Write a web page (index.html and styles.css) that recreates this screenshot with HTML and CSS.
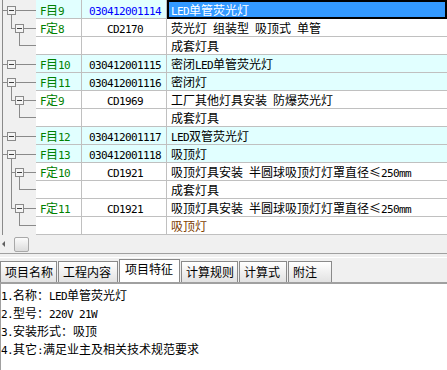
FILE: index.html
```html
<!DOCTYPE html>
<html>
<head>
<meta charset="utf-8">
<link rel="stylesheet" href="styles.css">
</head>
<body>
<div class="win">
  <div class="grid">
    <svg class="tree" width="36" height="235" viewBox="0 0 36 235">
      <g stroke="#8a8a8a" stroke-width="1" fill="none" shape-rendering="crispEdges">
        <line x1="2.5" y1="0" x2="2.5" y2="235"/>
        <line x1="2" y1="10.5" x2="7" y2="10.5"/>
        <line x1="16" y1="10.5" x2="36" y2="10.5"/>
        <line x1="11.5" y1="15" x2="11.5" y2="28"/>
        <line x1="11" y1="28.5" x2="15" y2="28.5"/>
        <line x1="24" y1="28.5" x2="36" y2="28.5"/>
        <line x1="19.5" y1="33" x2="19.5" y2="45"/>
        <line x1="19" y1="45.5" x2="36" y2="45.5"/>
        <line x1="2" y1="64.5" x2="7" y2="64.5"/>
        <line x1="16" y1="64.5" x2="36" y2="64.5"/>
        <line x1="2" y1="82.5" x2="7" y2="82.5"/>
        <line x1="16" y1="82.5" x2="36" y2="82.5"/>
        <line x1="11.5" y1="87" x2="11.5" y2="100"/>
        <line x1="11" y1="100.5" x2="15" y2="100.5"/>
        <line x1="24" y1="100.5" x2="36" y2="100.5"/>
        <line x1="19.5" y1="105" x2="19.5" y2="117"/>
        <line x1="19" y1="117.5" x2="36" y2="117.5"/>
        <line x1="2" y1="136.5" x2="7" y2="136.5"/>
        <line x1="16" y1="136.5" x2="36" y2="136.5"/>
        <line x1="2" y1="154.5" x2="7" y2="154.5"/>
        <line x1="16" y1="154.5" x2="36" y2="154.5"/>
        <line x1="11.5" y1="159" x2="11.5" y2="208"/>
        <line x1="11" y1="172.5" x2="15" y2="172.5"/>
        <line x1="24" y1="172.5" x2="36" y2="172.5"/>
        <line x1="19.5" y1="177" x2="19.5" y2="189"/>
        <line x1="19" y1="189.5" x2="36" y2="189.5"/>
        <line x1="11" y1="208.5" x2="15" y2="208.5"/>
        <line x1="24" y1="208.5" x2="36" y2="208.5"/>
        <line x1="19.5" y1="213" x2="19.5" y2="225"/>
        <line x1="19" y1="225.5" x2="36" y2="225.5"/>
      </g>
      <g stroke="#8a8a8a" fill="#f4f4f4" shape-rendering="crispEdges">
        <rect x="7.5" y="6.5" width="8" height="8"/>
        <rect x="15.5" y="24.5" width="8" height="8"/>
        <rect x="7.5" y="60.5" width="8" height="8"/>
        <rect x="7.5" y="78.5" width="8" height="8"/>
        <rect x="15.5" y="96.5" width="8" height="8"/>
        <rect x="7.5" y="132.5" width="8" height="8"/>
        <rect x="7.5" y="150.5" width="8" height="8"/>
        <rect x="15.5" y="168.5" width="8" height="8"/>
        <rect x="15.5" y="204.5" width="8" height="8"/>
      </g>
      <g stroke="#404040" shape-rendering="crispEdges">
        <line x1="9" y1="10.5" x2="14" y2="10.5"/>
        <line x1="17" y1="28.5" x2="22" y2="28.5"/>
        <line x1="9" y1="64.5" x2="14" y2="64.5"/>
        <line x1="9" y1="82.5" x2="14" y2="82.5"/>
        <line x1="17" y1="100.5" x2="22" y2="100.5"/>
        <line x1="9" y1="136.5" x2="14" y2="136.5"/>
        <line x1="9" y1="154.5" x2="14" y2="154.5"/>
        <line x1="17" y1="172.5" x2="22" y2="172.5"/>
        <line x1="17" y1="208.5" x2="22" y2="208.5"/>
      </g>
    </svg>
    <div class="rows">
      <div class="row first cyan">
        <div class="c1 g"><span class="a">F</span>目<span class="a">9</span></div>
        <div class="c2 blue"><span class="a">030412001114</span></div>
        <div class="c3 sel"><span class="a">LED</span>单管荧光灯</div>
      </div>
      <div class="row">
        <div class="c1 g"><span class="a">F</span>定<span class="a">8</span></div>
        <div class="c2"><span class="a">CD2170</span></div>
        <div class="c3">荧光灯 组装型 吸顶式 单管</div>
      </div>
      <div class="row">
        <div class="c1"></div>
        <div class="c2"></div>
        <div class="c3">成套灯具</div>
      </div>
      <div class="row cyan">
        <div class="c1 g"><span class="a">F</span>目<span class="a">10</span></div>
        <div class="c2"><span class="a">030412001115</span></div>
        <div class="c3">密闭<span class="a">LED</span>单管荧光灯</div>
      </div>
      <div class="row cyan">
        <div class="c1 g"><span class="a">F</span>目<span class="a">11</span></div>
        <div class="c2"><span class="a">030412001116</span></div>
        <div class="c3">密闭灯</div>
      </div>
      <div class="row">
        <div class="c1 g"><span class="a">F</span>定<span class="a">9</span></div>
        <div class="c2"><span class="a">CD1969</span></div>
        <div class="c3">工厂其他灯具安装 防爆荧光灯</div>
      </div>
      <div class="row">
        <div class="c1"></div>
        <div class="c2"></div>
        <div class="c3">成套灯具</div>
      </div>
      <div class="row cyan">
        <div class="c1 g"><span class="a">F</span>目<span class="a">12</span></div>
        <div class="c2"><span class="a">030412001117</span></div>
        <div class="c3"><span class="a">LED</span>双管荧光灯</div>
      </div>
      <div class="row cyan">
        <div class="c1 g"><span class="a">F</span>目<span class="a">13</span></div>
        <div class="c2"><span class="a">030412001118</span></div>
        <div class="c3">吸顶灯</div>
      </div>
      <div class="row">
        <div class="c1 g"><span class="a">F</span>定<span class="a">10</span></div>
        <div class="c2"><span class="a">CD1921</span></div>
        <div class="c3">吸顶灯具安装 半圆球吸顶灯灯罩直径≤<span class="a">250mm</span></div>
      </div>
      <div class="row">
        <div class="c1"></div>
        <div class="c2"></div>
        <div class="c3">成套灯具</div>
      </div>
      <div class="row">
        <div class="c1 g"><span class="a">F</span>定<span class="a">11</span></div>
        <div class="c2"><span class="a">CD1921</span></div>
        <div class="c3">吸顶灯具安装 半圆球吸顶灯灯罩直径≤<span class="a">250mm</span></div>
      </div>
      <div class="row">
        <div class="c1"></div>
        <div class="c2"></div>
        <div class="c3 brown">吸顶灯</div>
      </div>
    </div>
  </div>
  <div class="hscroll">
    <span class="arrow"></span>
    <span class="thumb"></span>
  </div>
  <div class="splitter"></div>
  <div class="tabs">
    <div class="tab w1">项目名称</div>
    <div class="tab w2">工程内容</div>
    <div class="tab w3 active">项目特征</div>
    <div class="tab w4">计算规则</div>
    <div class="tab w5">计算式</div>
    <div class="tab w6">附注</div>
  </div>
  <div class="content">
    <div class="line"><span class="a">1.</span>名称：<span class="a">LED</span>单管荧光灯</div>
    <div class="line"><span class="a">2.</span>型号：<span class="a">220V 21W</span></div>
    <div class="line"><span class="a">3.</span>安装形式：吸顶</div>
    <div class="line"><span class="a">4.</span>其它<span class="a">:</span>满足业主及相关技术规范要求</div>
  </div>
</div>
</body>
</html>
```

FILE: styles.css
```css
* { box-sizing: border-box; }
html, body {
  margin: 0;
  padding: 0;
  background: #f0f0f0;
}
body {
  width: 447px;
  height: 370px;
  overflow: hidden;
  font-family: "Noto Sans CJK SC", "Liberation Sans", sans-serif;
  font-size: 12px;
  color: #000;
  word-spacing: 3.3px;
}
.a {
  font-family: "DejaVu Sans Mono", monospace;
  font-size: 11px;
  letter-spacing: -0.62px;
  word-spacing: 0;
}
.win {
  display: flex;
  flex-direction: column;
  width: 447px;
  height: 370px;
}
.grid {
  display: flex;
  height: 235px;
  background: #f0f0f0;
}
.tree {
  display: block;
  flex: none;
}
.rows {
  flex: 1;
  display: flex;
  flex-direction: column;
}
.row {
  display: flex;
  height: 18px;
  border-bottom: 1px solid #c0c0c0;
  background: #fff;
  line-height: 17px;
  white-space: nowrap;
}
.row.first {
  height: 19px;
  padding-top: 1px;
}
.row.cyan { background: #e1ffff; }
.c1 {
  width: 46px;
  flex: none;
  border-right: 1px solid #c0c0c0;
  padding-left: 4px;
}
.c2 {
  width: 85px;
  flex: none;
  border-right: 1px solid #c0c0c0;
  text-align: center;
  padding-left: 2px;
}
.c3 {
  flex: 1;
  padding-left: 4px;
  overflow: hidden;
}
.row.first .c1, .row.first .c2 { margin-top: -1px; padding-top: 1px; }
.c3.sel {
  margin-top: -1px;
  height: 19px;
  align-self: flex-start;
  background: #3399ff;
  border: 2px solid #000;
  color: #fff;
  padding-left: 2px;
  line-height: 15px;
}
.g { color: #008000; }
.blue { color: #0000ff; }
.brown { color: #804000; }

.hscroll {
  height: 18px;
  background: #f0f0f0;
  display: flex;
  align-items: center;
  padding-left: 2px;
  gap: 9px;
}
.arrow {
  width: 0;
  height: 0;
  border-top: 3px solid transparent;
  border-bottom: 3px solid transparent;
  border-right: 3px solid #606060;
}
.thumb {
  width: 15px;
  height: 15px;
  border: 1px solid #a8a8a8;
  border-radius: 2px;
  background: linear-gradient(#fbfbfb, #dcdcdc);
}
.splitter {
  height: 4px;
  border-top: 1px solid #a0a0a0;
  background: #f0f0f0;
}
.tabs {
  display: flex;
  height: 25px;
  align-items: flex-end;
  padding-top: 2px;
  gap: 1px;
  background: #f0f0f0;
  border-top: 1px solid #ffffff;
  word-spacing: 0;
}
.tab {
  height: 21px;
  line-height: 19px;
  padding-left: 4px;
  border: 1px solid #8a8a8a;
  border-bottom: none;
  background: linear-gradient(#ffffff, #e2e2e2);
  white-space: nowrap;
}
.tab.active {
  height: 23px;
  background: #fff;
  line-height: 17px;
  padding-left: 5px;
}
.w1 { width: 57px; }
.w2 { width: 60px; }
.w3 { width: 61px; }
.w4 { width: 57px; }
.w5 { width: 48px; }
.w6 { width: 44px; }
.content {
  flex: 1;
  background: #fff;
  border-top: 2px solid #a0a0a0;
  border-left: 1px solid #a0a0a0;
  padding-top: 3px;
  padding-left: 0;
  line-height: 16px;
}
.line { white-space: nowrap; }
```
